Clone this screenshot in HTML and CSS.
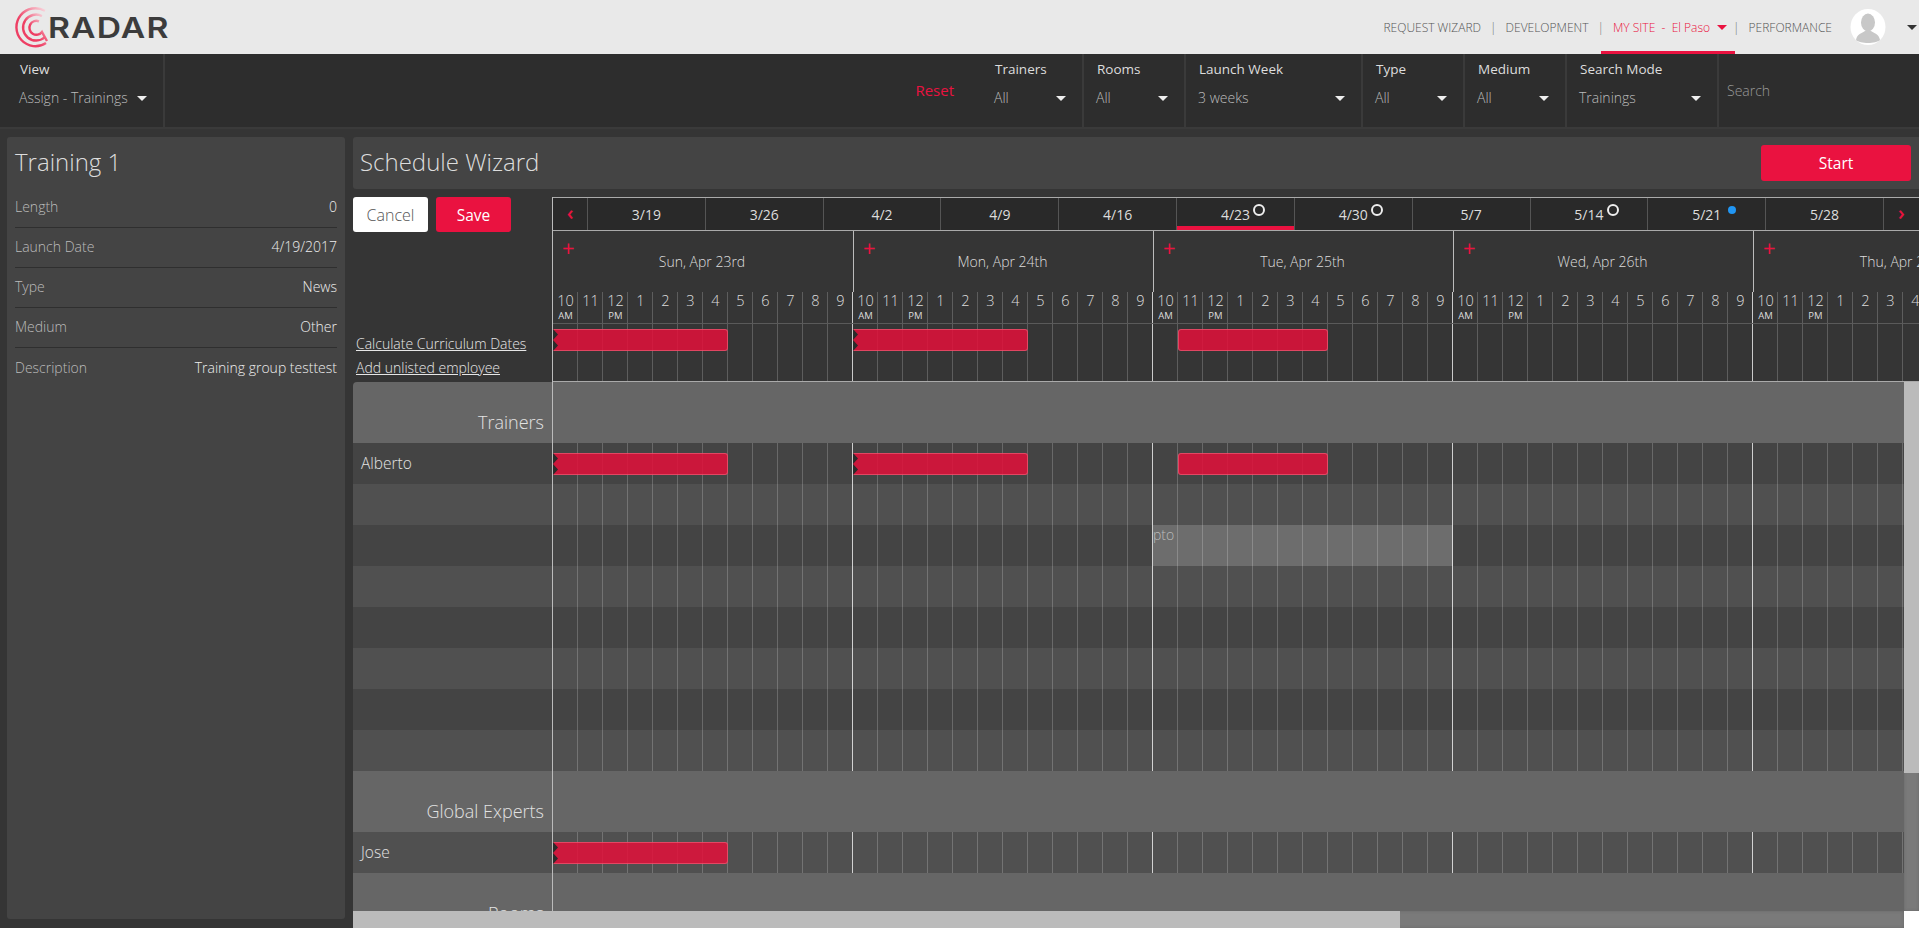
FILE: index.html
```html
<!DOCTYPE html>
<html lang="en">
  <head>
    <meta charset="UTF-8" />
    <title>Radar - Schedule Wizard</title>
    <link rel="stylesheet" href="styles.css">
  </head>

  <body>
    <header class="topbar">
      <div class="logo">
        <svg class="logo-mark" width="36" height="42" viewBox="0 0 36 42" aria-hidden="true">
          <defs>
            <linearGradient id="fade" x1="1" y1="0" x2="0.4" y2="0.6">
              <stop offset="0" stop-color="#f9dde3" />
              <stop offset="1" stop-color="#ee3f64" />
            </linearGradient>
          </defs>
          <g fill="none" stroke="url(#fade)" stroke-width="2.4">
            <path d="M31 4.8 A19 19 0 1 0 32 37" />
            <path d="M28 10 A13 13 0 1 0 31 31" />
            <path d="M25 15.3 A7 7 0 1 0 28 26 L33 35" />
          </g>
        </svg>
        <span class="logo-text">RADAR</span>
      </div>
      <nav class="topnav">
        <a class="topnav-link">Request Wizard</a>
        <span class="topnav-sep">|</span>
        <a class="topnav-link">Development</a>
        <span class="topnav-sep">|</span>
        <a class="topnav-link topnav-site">My Site &nbsp;-&nbsp; <span class="site-name">El Paso</span><i class="caret caret-red"></i></a>
        <span class="topnav-sep topnav-sep-tight">|</span>
        <a class="topnav-link">Performance</a>
        <svg class="avatar" width="36" height="36" viewBox="0 0 36 36" aria-hidden="true">
          <ellipse cx="18" cy="18" rx="17.5" ry="18" fill="#fff" />
          <ellipse cx="18" cy="13.5" rx="7" ry="9" fill="#c8c8c8" />
          <path d="M6 31 C7 25 12 24 15 22 L21 22 C24 24 29 25 30 31 C26 35 10 35 6 31 Z" fill="#c8c8c8" />
        </svg>
        <i class="caret caret-dark"></i>
      </nav>
    </header>

    <section class="filters">
      <div class="filter filter-view">
        <label class="filter-label">View</label>
        <div class="filter-value">Assign - Trainings<i class="caret"></i></div>
      </div>
      <a class="reset">Reset</a>
      <div class="filter filter-sm">
        <label class="filter-label">Trainers</label>
        <div class="filter-value">All<i class="caret"></i></div>
      </div>
      <div class="filter filter-sm">
        <label class="filter-label">Rooms</label>
        <div class="filter-value">All<i class="caret"></i></div>
      </div>
      <div class="filter filter-lg">
        <label class="filter-label">Launch Week</label>
        <div class="filter-value">3 weeks<i class="caret"></i></div>
      </div>
      <div class="filter filter-sm">
        <label class="filter-label">Type</label>
        <div class="filter-value">All<i class="caret"></i></div>
      </div>
      <div class="filter filter-sm">
        <label class="filter-label">Medium</label>
        <div class="filter-value">All<i class="caret"></i></div>
      </div>
      <div class="filter filter-md">
        <label class="filter-label">Search Mode</label>
        <div class="filter-value">Trainings<i class="caret"></i></div>
      </div>
      <div class="filter-search">Search</div>
    </section>

    <main class="content">
      <aside class="details">
        <h2>Training 1</h2>
        <div class="detail"><span>Length</span><b>0</b></div>
        <div class="detail"><span>Launch Date</span><b>4/19/2017</b></div>
        <div class="detail"><span>Type</span><b>News</b></div>
        <div class="detail"><span>Medium</span><b>Other</b></div>
        <div class="detail detail-last"><span>Description</span><b>Training group testtest</b></div>
      </aside>

      <section class="wizard">
        <div class="wizard-head">
          <h1>Schedule Wizard</h1>
          <button class="btn btn-start">Start</button>
        </div>

        <div class="plan">
          <div class="plan-side">
            <div class="plan-buttons">
              <button class="btn btn-cancel">Cancel</button>
              <button class="btn btn-save">Save</button>
            </div>
            <div class="plan-links">
              <a>Calculate Curriculum Dates</a>
              <a>Add unlisted employee</a>
            </div>
          </div>

          <div class="plan-main">
            <div class="weeks">
              <div class="week-arrow">&#x2039;</div>
              <div class="week">3/19</div>
              <div class="week">3/26</div>
              <div class="week">4/2</div>
              <div class="week">4/9</div>
              <div class="week">4/16</div>
              <div class="week week-on">4/23<i class="ring"></i></div>
              <div class="week">4/30<i class="ring"></i></div>
              <div class="week">5/7</div>
              <div class="week">5/14<i class="ring"></i></div>
              <div class="week">5/21<i class="dot"></i></div>
              <div class="week">5/28</div>
              <div class="week-arrow week-arrow-next">&#x203A;</div>
            </div>

            <div class="day-titles">
              <div class="day-title"><span class="day-add">+</span>Sun, Apr 23rd</div>
              <div class="day-title"><span class="day-add">+</span>Mon, Apr 24th</div>
              <div class="day-title"><span class="day-add">+</span>Tue, Apr 25th</div>
              <div class="day-title"><span class="day-add">+</span>Wed, Apr 26th</div>
              <div class="day-title"><span class="day-add">+</span>Thu, Apr 27th</div>
            </div>

            <div class="hours grid">
              <span>10<small>AM</small></span><span>11</span><span>12<small>PM</small></span><span>1</span><span>2</span><span>3</span><span>4</span><span>5</span><span>6</span><span>7</span><span>8</span><span>9</span>
              <span>10<small>AM</small></span><span>11</span><span>12<small>PM</small></span><span>1</span><span>2</span><span>3</span><span>4</span><span>5</span><span>6</span><span>7</span><span>8</span><span>9</span>
              <span>10<small>AM</small></span><span>11</span><span>12<small>PM</small></span><span>1</span><span>2</span><span>3</span><span>4</span><span>5</span><span>6</span><span>7</span><span>8</span><span>9</span>
              <span>10<small>AM</small></span><span>11</span><span>12<small>PM</small></span><span>1</span><span>2</span><span>3</span><span>4</span><span>5</span><span>6</span><span>7</span><span>8</span><span>9</span>
              <span>10<small>AM</small></span><span>11</span><span>12<small>PM</small></span><span>1</span><span>2</span><span>3</span><span>4</span><span>5</span>
            </div>

            <div class="summary grid">
              <div class="bar bar-cut" style="left: 0; width: 175px"></div>
              <div class="bar bar-cut" style="left: 300px; width: 175px"></div>
              <div class="bar" style="left: 625px; width: 150px"></div>
            </div>
          </div>
        </div>

        <div class="board">
          <div class="lanes">
            <div class="lane lane-group"><div class="lane-name">Trainers</div><div class="lane-track"></div></div>

            <div class="lane lane-a">
              <div class="lane-name">Alberto</div>
              <div class="lane-track grid">
                <div class="bar bar-cut" style="left: 0; width: 175px"></div>
                <div class="bar bar-cut" style="left: 300px; width: 175px"></div>
                <div class="bar" style="left: 625px; width: 150px"></div>
              </div>
            </div>
            <div class="lane lane-b"><div class="lane-name"></div><div class="lane-track grid"></div></div>
            <div class="lane lane-a">
              <div class="lane-name"></div>
              <div class="lane-track grid">
                <div class="pto" style="left: 600px; width: 300px">pto</div>
              </div>
            </div>
            <div class="lane lane-b"><div class="lane-name"></div><div class="lane-track grid"></div></div>
            <div class="lane lane-a"><div class="lane-name"></div><div class="lane-track grid"></div></div>
            <div class="lane lane-b"><div class="lane-name"></div><div class="lane-track grid"></div></div>
            <div class="lane lane-a"><div class="lane-name"></div><div class="lane-track grid"></div></div>
            <div class="lane lane-b"><div class="lane-name"></div><div class="lane-track grid"></div></div>

            <div class="lane lane-group"><div class="lane-name">Global Experts</div><div class="lane-track"></div></div>

            <div class="lane lane-b">
              <div class="lane-name">Jose</div>
              <div class="lane-track grid">
                <div class="bar bar-cut" style="left: 0; width: 175px"></div>
              </div>
            </div>

            <div class="lane lane-group"><div class="lane-name">Rooms</div><div class="lane-track"></div></div>
          </div>
          <div class="vbar"><div class="vbar-thumb"></div></div>
        </div>

        <div class="hbar-row">
          <div class="hbar"><div class="hbar-thumb"></div></div>
          <div class="hbar-corner"></div>
        </div>
      </section>
    </main>
  </body>
</html>
```

FILE: styles.css
```css
* {
  box-sizing: border-box;
}

html,
body {
  height: 100%;
}

body {
  margin: 0;
  display: flex;
  flex-direction: column;
  height: 100vh;
  overflow: hidden;
  background-color: #353535;
  color: #ddd;
  font-family: "Open Sans", "Liberation Sans", sans-serif;
  font-size: 14px;
  font-weight: 300;
}

h1,
h2 {
  margin: 0;
  font-weight: 300;
}

.caret {
  display: inline-block;
  flex: none;
  width: 0;
  height: 0;
  border-left: 5px solid transparent;
  border-right: 5px solid transparent;
  border-top: 5px solid #eee;
}

.caret-red {
  margin-left: 7px;
  border-top-color: #ea1240;
}

.caret-dark {
  margin-left: 21px;
  margin-right: 2px;
  border-top-color: #333;
}

/* top bar */
.topbar {
  flex: none;
  display: flex;
  align-items: stretch;
  justify-content: space-between;
  height: 54px;
  background-color: #e9e9e9;
}

.logo {
  display: flex;
  align-items: center;
  padding-left: 14px;
}

.logo-text {
  margin-left: -2px;
  color: #3c3c3c;
  font-family: Inter, "Open Sans", sans-serif;
  font-size: 29px;
  font-weight: 600;
  letter-spacing: 1px;
  transform: scaleX(1.16);
  transform-origin: left center;
}

.topnav {
  display: flex;
  align-items: center;
  color: #555;
  font-size: 12px;
  text-transform: uppercase;
}

.topnav-sep {
  margin: 0 9px;
  color: #777;
}

.topnav-sep-tight {
  margin-left: 0;
}

.topnav-site {
  position: relative;
  display: flex;
  align-items: center;
  align-self: stretch;
  margin-right: 6px;
  color: #ea1240;
  white-space: pre;
}

.topnav-site::after {
  content: "";
  position: absolute;
  left: -12px;
  right: -8px;
  bottom: 0;
  height: 3px;
  background-color: #ea1240;
}

.site-name {
  text-transform: none;
}

.avatar {
  margin-left: 18px;
}

/* filter bar */
.filters {
  flex: none;
  display: flex;
  height: 75px;
  background-color: #2d2d2d;
  border-bottom: 2px solid #3a3a3a;
}

.filter {
  display: flex;
  flex-direction: column;
  border-right: 2px solid #3a3a3a;
  padding: 6px 16px 0 13px;
}

.filter-view {
  width: 165px;
  margin-right: auto;
  padding-left: 20px;
}

.filter-sm {
  width: 102px;
}

.filter-md {
  width: 152px;
}

.filter-lg {
  width: 177px;
}

.filter-label {
  line-height: 19px;
  font-weight: 400;
  font-size: 13.5px;
}

.filter-value {
  display: flex;
  align-items: center;
  justify-content: space-between;
  margin-top: 10px;
  margin-left: -1px;
  line-height: 18px;
  color: #bbb;
  white-space: nowrap;
}

.reset {
  align-self: center;
  margin-right: 28px;
  margin-bottom: 2px;
  color: #ea1240;
  font-size: 15px;
  font-weight: 400;
}

.filter-search {
  width: 200px;
  padding: 27px 0 0 8px;
  color: #999;
  line-height: 19px;
}

/* main area */
.content {
  flex: 1;
  min-height: 0;
  display: flex;
  gap: 8px;
  padding: 8px 0 0 7px;
}

.details {
  flex: none;
  width: 338px;
  height: 782px;
  padding: 10px 8px 0;
  background-color: #444;
  border-radius: 3px;
}

.details h2 {
  height: 41px;
  font-size: 24px;
  line-height: 30px;
  color: #ddd;
}

.detail {
  display: flex;
  justify-content: space-between;
  align-items: center;
  height: 40px;
  border-bottom: 1px solid #2f2f2f;
  padding-bottom: 2px;
  color: #bbb;
}

.detail b {
  color: #eee;
  font-weight: 300;
}

.detail-last {
  border-bottom: none;
}

.wizard {
  flex: 1;
  min-width: 0;
  display: flex;
  flex-direction: column;
}

.wizard-head {
  flex: none;
  display: flex;
  align-items: center;
  justify-content: space-between;
  height: 52px;
  padding: 0 8px 0 7px;
  background-color: #444;
  border-radius: 3px 0 0 3px;
}

.wizard-head h1 {
  padding-bottom: 3px;
  font-size: 24px;
  color: #ddd;
}

.btn {
  height: 35px;
  width: 75px;
  border: none;
  border-radius: 3px;
  padding: 0;
  font-family: inherit;
  font-size: 15.5px;
  font-weight: 400;
  color: #fff;
  background-color: #ea1240;
}

.btn-start {
  width: 150px;
  height: 36px;
}

.btn-cancel {
  background-color: #fff;
  color: #555;
  font-size: 16px;
  font-weight: 300;
}

/* schedule header */
.plan {
  flex: none;
  display: flex;
  height: 193px;
  padding-top: 8px;
}

.plan-side {
  flex: none;
  display: flex;
  flex-direction: column;
  justify-content: space-between;
  width: 199px;
}

.plan-buttons {
  display: flex;
  gap: 8px;
}

.plan-links {
  display: flex;
  flex-direction: column;
  padding: 0 0 2px 3px;
  font-size: 14px;
}

.plan-links a {
  height: 24px;
  line-height: 24px;
  text-decoration: underline;
  color: #e6e6e6;
}

.plan-main {
  flex: 1;
  min-width: 0;
  overflow: hidden;
  border-left: 1px solid #bbb;
}

.weeks {
  display: flex;
  height: 34px;
  background-color: #292929;
  border-top: 1px solid #aaa;
  border-bottom: 1px solid #aaa;
}

.week,
.week-arrow {
  display: flex;
  align-items: center;
  justify-content: center;
  border-right: 1px solid #555;
}

.week {
  position: relative;
  flex: 1;
  font-size: 14px;
  font-weight: 400;
}

.week-arrow {
  flex: none;
  width: 35px;
  padding-bottom: 3px;
  color: #ea1240;
  font-size: 20px;
  font-weight: 600;
}

.week-arrow-next {
  border-right: none;
}

.week-on {
  box-shadow: inset 0 -4px 0 #ea1240;
}

/* markers float next to the centred date */
.ring,
.dot {
  position: absolute;
  border-radius: 50%;
}

.ring {
  left: calc(50% + 18px);
  top: 6px;
  width: 12px;
  height: 12px;
  border: 2px solid #eee;
}

.dot {
  left: calc(50% + 21px);
  top: 8px;
  width: 8px;
  height: 8px;
  background-color: #2196f3;
}

.day-titles {
  display: flex;
  height: 61px;
}

.day-title {
  position: relative;
  flex: none;
  width: 300px;
  padding-top: 22px;
  padding-right: 2px;
  text-align: center;
  font-size: 14px;
  line-height: 18px;
  border-left: 1px solid #bbb;
}

.day-title:first-child {
  border-left: none;
}

.day-add {
  position: absolute;
  left: 9px;
  top: 4px;
  color: #ea1240;
  font-size: 22px;
  line-height: 24px;
  font-weight: 400;
}

/* 25px per hour, 12 hours per day */
.grid {
  background-image:
    linear-gradient(to right, rgba(255, 255, 255, 0.68) 1px, transparent 1px),
    linear-gradient(to right, rgba(255, 255, 255, 0.2) 1px, transparent 1px);
  background-size: 300px 100%, 25px 100%;
  background-position: -1px 0, -1px 0;
}

.hours {
  display: flex;
  height: 32px;
  border-bottom: 1px solid #5a5a5a;
}

.hours span {
  flex: none;
  width: 25px;
  text-align: center;
  font-size: 14.5px;
  line-height: 18px;
}

.hours small {
  display: block;
  margin-top: 1px;
  font-size: 9.5px;
  line-height: 10px;
  font-weight: 400;
}

.summary {
  position: relative;
  height: 58px;
  border-bottom: 1px solid #aaa;
}

.bar {
  position: absolute;
  top: 5px;
  height: 22px;
  border: 1px solid rgba(255, 130, 150, 0.45);
  border-radius: 3px;
  background-color: rgba(227, 15, 57, 0.85);
}

.lane-track .bar {
  top: 10px;
}

.bar-cut {
  border-left: none;
  border-top-left-radius: 0;
  border-bottom-left-radius: 0;
}

.bar-cut::before {
  content: "";
  position: absolute;
  left: 0;
  top: -1px;
  bottom: -1px;
  width: 5px;
  background-color: #2b2b2b;
  clip-path: polygon(0 0, 100% 25%, 0 50%, 100% 75%, 0 100%);
}

/* rows */
.board {
  flex: 1;
  min-height: 0;
  display: flex;
}

.lanes {
  flex: 1;
  min-width: 0;
  overflow: hidden;
  border-top-left-radius: 4px;
}

.lane {
  display: flex;
  height: 41px;
}

.lane-a {
  background-color: #444;
}

.lane-b {
  background-color: #505050;
}

.lane-group {
  height: 61px;
  background-color: #666;
}

.lane-name {
  flex: none;
  width: 199px;
  padding-left: 8px;
  line-height: 41px;
  font-size: 15.5px;
  color: #e2e2e2;
}

.lane-group .lane-name {
  padding: 0 8px 0 0;
  text-align: right;
  line-height: 80px;
  font-size: 18px;
}

.lane-track {
  position: relative;
  flex: 1;
  min-width: 0;
  overflow: hidden;
  border-left: 1px solid #bbb;
}

.pto {
  position: absolute;
  top: 0;
  bottom: 0;
  background-color: rgba(255, 255, 255, 0.22);
  color: #bbb;
  font-size: 14px;
  line-height: 20px;
}

/* scrollbars */
.vbar {
  flex: none;
  width: 15px;
  background-color: #7a7a7a;
  box-shadow: inset 0 0 3px #666;
}

.vbar-thumb {
  height: 391px;
  background-color: #bbb;
}

.hbar-row {
  flex: none;
  display: flex;
  height: 17px;
}

.hbar {
  flex: 1;
  background-color: #7a7a7a;
  box-shadow: inset 0 0 3px #666;
}

.hbar-thumb {
  width: 1047px;
  height: 100%;
  background-color: #bbb;
}

.hbar-corner {
  flex: none;
  width: 15px;
  background-color: #fff;
}
```
